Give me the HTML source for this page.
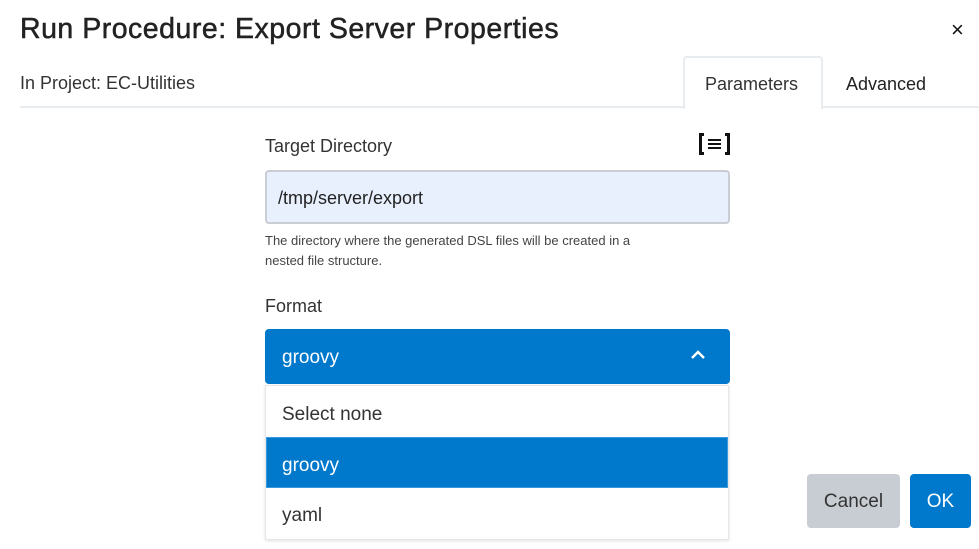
<!DOCTYPE html>
<html><head><meta charset="utf-8"><style>
*{box-sizing:border-box;margin:0;padding:0}
body{width:979px;height:549px;background:#fff;font-family:"Liberation Sans",sans-serif;color:#222;position:relative;overflow:hidden}
.a{position:absolute;white-space:nowrap}
</style></head><body>
<div class="a" style="left:20px;top:12px;font-size:28.5px;letter-spacing:0.5px;line-height:34px;-webkit-text-stroke:0.5px #222;color:#222">Run Procedure: Export Server Properties</div>
<div class="a" style="left:951px;top:18px;font-size:22px;line-height:24px;color:#111">×</div>
<div class="a" style="left:20px;top:72px;font-size:18px;line-height:22px;color:#333">In Project: EC-Utilities</div>
<div class="a" style="left:20px;top:106px;width:959px;height:2px;background:#e8ecef"></div>
<div class="a" style="left:683px;top:56px;width:140px;height:53px;background:#fff;border:2px solid #e8ecef;border-bottom:none;border-radius:4px 4px 0 0"></div>
<div class="a" style="left:705px;top:73px;font-size:18px;line-height:22px;color:#333">Parameters</div>
<div class="a" style="left:846px;top:73px;font-size:18px;line-height:22px;color:#222">Advanced</div>
<div class="a" style="left:265px;top:135px;font-size:18px;line-height:22px;color:#333">Target Directory</div>
<svg class="a" style="left:698px;top:132px" width="33" height="24" viewBox="0 0 33 24"><path d="M6 2.5H2.5V21.5H6M27 2.5H30.5V21.5H27" fill="none" stroke="#111" stroke-width="3"/><path d="M10 8H23M10 12H23M10 16H23" stroke="#111" stroke-width="2"/></svg>
<div class="a" style="left:265px;top:170px;width:465px;height:54px;background:#e8f0fe;border:2px solid #c9ced4;border-radius:4px"></div>
<div class="a" style="left:278px;top:187px;font-size:18px;line-height:22px;color:#222">/tmp/server/export</div>
<div class="a" style="left:265px;top:231px;font-size:13px;line-height:20px;color:#444">The directory where the generated DSL files will be created in a<br>nested file structure.</div>
<div class="a" style="left:265px;top:295px;font-size:18px;line-height:22px;color:#333">Format</div>
<div class="a" style="left:265px;top:329px;width:465px;height:55px;background:#0078cc;border-radius:4px"></div>
<div class="a" style="left:282px;top:347px;font-size:19px;line-height:22px;color:#fff">groovy</div>
<svg class="a" style="left:689px;top:348px" width="18" height="14" viewBox="0 0 18 14"><path d="M3 10L9 4L15 10" fill="none" stroke="#fff" stroke-width="2.5"/></svg>
<div class="a" style="left:265px;top:385px;width:464px;height:155px;background:#fff;border:1px solid #e3e7ea;box-shadow:0 1px 3px rgba(0,0,0,.12)"></div>
<div class="a" style="left:282px;top:404px;font-size:19px;line-height:22px;color:#333">Select none</div>
<div class="a" style="left:266px;top:437px;width:462px;height:51px;background:#0078cc;border:1px solid #3a98dd"></div>
<div class="a" style="left:282px;top:455px;font-size:19px;line-height:22px;color:#fff">groovy</div>
<div class="a" style="left:282px;top:505px;font-size:19px;line-height:22px;color:#333">yaml</div>
<div class="a" style="left:807px;top:474px;width:93px;height:54px;background:#c8cdd3;border-radius:4px;font-size:19px;line-height:56px;text-align:center;color:#333">Cancel</div>
<div class="a" style="left:910px;top:474px;width:61px;height:54px;background:#0078cc;border-radius:4px;font-size:19px;line-height:56px;text-align:center;color:#fff">OK</div>
</body></html>
